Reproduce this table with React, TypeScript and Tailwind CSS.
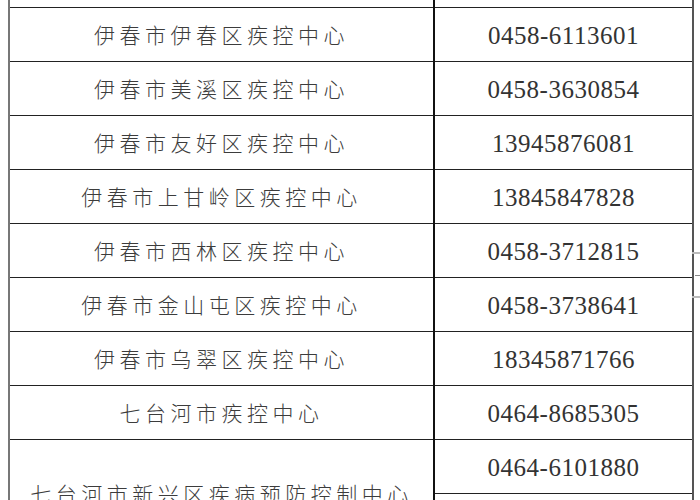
const rows: [string, string][] = [
  ['伊春市伊春区疾控中心', '0458-6113601'],
  ['伊春市美溪区疾控中心', '0458-3630854'],
  ['伊春市友好区疾控中心', '13945876081'],
  ['伊春市上甘岭区疾控中心', '13845847828'],
  ['伊春市西林区疾控中心', '0458-3712815'],
  ['伊春市金山屯区疾控中心', '0458-3738641'],
  ['伊春市乌翠区疾控中心', '18345871766'],
  ['七台河市疾控中心', '0464-8685305'],
];

const cjk = { fontFamily: '"Noto Sans CJK SC", "Noto Sans", sans-serif' };
const num = { fontFamily: '"Liberation Serif", "DejaVu Serif", serif' };

function NameCell({ text, rowSpan }: { text: string; rowSpan?: number }) {
  return (
    <td
      rowSpan={rowSpan}
      className="border-l-2 border-l-[#777] border-t-[1.5px] border-t-[#222] text-center align-middle text-[21px] tracking-[4.5px] text-[#3c3c3c] font-light"
      style={cjk}
    >
      {text}
    </td>
  );
}

function PhoneCell({ text }: { text: string }) {
  return (
    <td
      className="border-l-2 border-l-[#111] border-r-2 border-r-[#555] border-t-[1.5px] border-t-[#222] pt-[3px] text-center align-middle text-[25px] tracking-[0.5px] text-[#333]"
      style={num}
    >
      {text}
    </td>
  );
}

export default function App() {
  return (
    <div className="w-[700px] h-[500px] overflow-hidden bg-white relative">
      <table className="ml-[8px] mt-[-47px] w-[684px] border-collapse table-fixed">
        <colgroup>
          <col className="w-[425px]" />
          <col className="w-[259px]" />
        </colgroup>
        <tbody>
          <tr className="h-[54px]">
            <NameCell text="" />
            <PhoneCell text="" />
          </tr>
          {rows.map(([name, phone]) => (
            <tr key={name} className="h-[54px]">
              <NameCell text={name} />
              <PhoneCell text={phone} />
            </tr>
          ))}
          <tr className="h-[54px]">
            <NameCell text="七台河市新兴区疾病预防控制中心" rowSpan={2} />
            <PhoneCell text="0464-6101880" />
          </tr>
          <tr className="h-[54px]">
            <PhoneCell text="0464-6101881" />
          </tr>
        </tbody>
      </table>
      <div className="absolute right-0 top-[252px] w-[8px] h-[2px] bg-[#bbb]" />
      <div className="absolute right-0 top-[275px] w-[5px] h-[1px] bg-[#888]" />
      <div className="absolute right-0 top-[296px] w-[8px] h-[2px] bg-[#bbb]" />
    </div>
  );
}
